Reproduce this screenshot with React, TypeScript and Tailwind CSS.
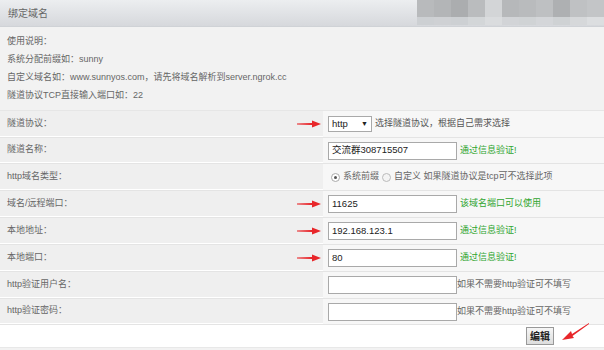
import React from "react";

const font = { fontFamily: '"Liberation Sans", "Noto Sans CJK SC", sans-serif' };

function Arrow({ className }: { className?: string }) {
  return (
    <svg width="24" height="8" viewBox="0 0 24 8" className={className}>
      <polygon points="0,3.6 15,3 15,0.5 24,4 15,7.5 15,5 0,4.4" fill="#e8262a" />
    </svg>
  );
}

const mosaic = [
  ["#b8babc", "#b3b5b7", "#abadaf", "#babcbe", "#d3d5d7", "#b6b8ba", "#b9bbbd", "#bec0c2", "#aeb0b2", "#bfc1c3", "#c3c5c7"],
  ["#cdd0d3", "#cfd1d4", "#cdd0d3", "#d3d6d8", "#dadcde", "#d2d4d7", "#d0d3d5", "#d4d6d9", "#cfd2d4", "#d6d8da", "#dcdee0"],
];

function Field({ value }: { value?: string }) {
  return (
    <div className="flex h-[18px] w-[129px] items-center border border-[#a9a9a9] bg-white px-[3px] text-[9.5px] text-[#222]">
      {value}
    </div>
  );
}

function Row({
  label,
  arrow,
  children,
  h = "h-[27px]",
}: {
  label: string;
  arrow?: boolean;
  children: React.ReactNode;
  h?: string;
}) {
  return (
    <div className={`grid grid-cols-[323px_1fr] border-b border-[#e4e4e4] ${h}`}>
      <div className="relative flex items-center border-b border-white bg-[#efefef] pl-[7px] text-[9px] text-[#666]">
        {label}
        {arrow && <Arrow className="absolute right-[2px] top-1/2 -translate-y-1/2" />}
      </div>
      <div className="flex items-center gap-[3px] bg-[#f7f7f7] pl-[5px] text-[9px] text-[#555]">
        {children}
      </div>
    </div>
  );
}

const ok = <span className="text-[9px] text-[#2fa52f]">通过信息验证!</span>;

export default function App() {
  return (
    <div className="relative flex h-[350px] w-[604px] flex-col overflow-hidden bg-[#f2f2f2]" style={font}>
      <div className="relative flex h-[27px] shrink-0 items-center border-b border-[#cfd2d6] bg-gradient-to-b from-[#eceef0] to-[#d6d8dc] pl-[8px] text-[10px] text-[#666]">
        绑定域名
        <div className="absolute right-0 top-0 flex flex-col">
          {mosaic.map((r, i) => (
            <div key={i} className={`flex ${i === 0 ? "h-[17px]" : "h-[8px]"}`}>
              {r.map((c, j) => (
                <div key={j} className="w-[17px]" style={{ background: c }} />
              ))}
            </div>
          ))}
        </div>
      </div>
      <div className="flex h-[84px] shrink-0 flex-col justify-center gap-[5px] border-b border-[#e6e6e6] pl-[7px] text-[9px] leading-[13px] text-[#666]">
        <div>使用说明：</div>
        <div>系统分配前缀如：sunny</div>
        <div>自定义域名如：www.sunnyos.com，请先将域名解析到server.ngrok.cc</div>
        <div>隧道协议TCP直接输入端口如：22</div>
      </div>
      <Row label="隧道协议：" arrow>
        <div className="flex h-[16px] w-[44px] items-center justify-between border border-[#a9a9a9] bg-white px-[3px] text-[9.5px] text-[#222]">
          http <span className="text-[7px]">▼</span>
        </div>
        <span>选择隧道协议，根据自己需求选择</span>
      </Row>
      <Row label="隧道名称：" h="h-[26px]">
        <Field value="交流群308715507" />
        {ok}
      </Row>
      <Row label="http域名类型：">
        <div className="flex items-center gap-[3px] pl-[3px] text-[#666]">
          <span className="h-[9px] w-[9px] rounded-full border border-[#aaa] bg-white p-[2px]">
            <span className="block h-full w-full rounded-full bg-[#555]" />
          </span>
          系统前缀
          <span className="h-[9px] w-[9px] rounded-full border border-[#bbb] bg-[#f4f4f4]" />
          自定义 如果隧道协议是tcp可不选择此项
        </div>
      </Row>
      <Row label="域名/远程端口：" arrow>
        <Field value="11625" />
        <span className="text-[#2fa52f]">该域名端口可以使用</span>
      </Row>
      <Row label="本地地址：" arrow>
        <Field value="192.168.123.1" />
        {ok}
      </Row>
      <Row label="本地端口：" arrow>
        <Field value="80" />
        {ok}
      </Row>
      <Row label="http验证用户名：">
        <Field />
        <span className="-ml-[3px] text-[#666]">如果不需要http验证可不填写</span>
      </Row>
      <Row label="http验证密码：" h="h-[26px]">
        <Field />
        <span className="-ml-[3px] text-[#666]">如果不需要http验证可不填写</span>
      </Row>
      <div className="relative flex h-[22px] shrink-0 items-center justify-end bg-white pr-[50px]">
        <div className="flex h-[18px] items-center border border-[#999] bg-gradient-to-b from-[#f6f6f6] to-[#dddddd] px-[3px] text-[10px] font-bold text-[#222]">
          编辑
        </div>
        <svg width="30" height="22" viewBox="0 0 30 22" className="absolute right-[14px] top-[-4px]">
          <polygon points="29,2 12,13 11,10 2,19 14,17 12.5,15 29,3" fill="#e8262a" />
        </svg>
      </div>
      <div className="flex-1 border-t border-[#e8e8e8] bg-[#f2f2f2]" />
    </div>
  );
}
